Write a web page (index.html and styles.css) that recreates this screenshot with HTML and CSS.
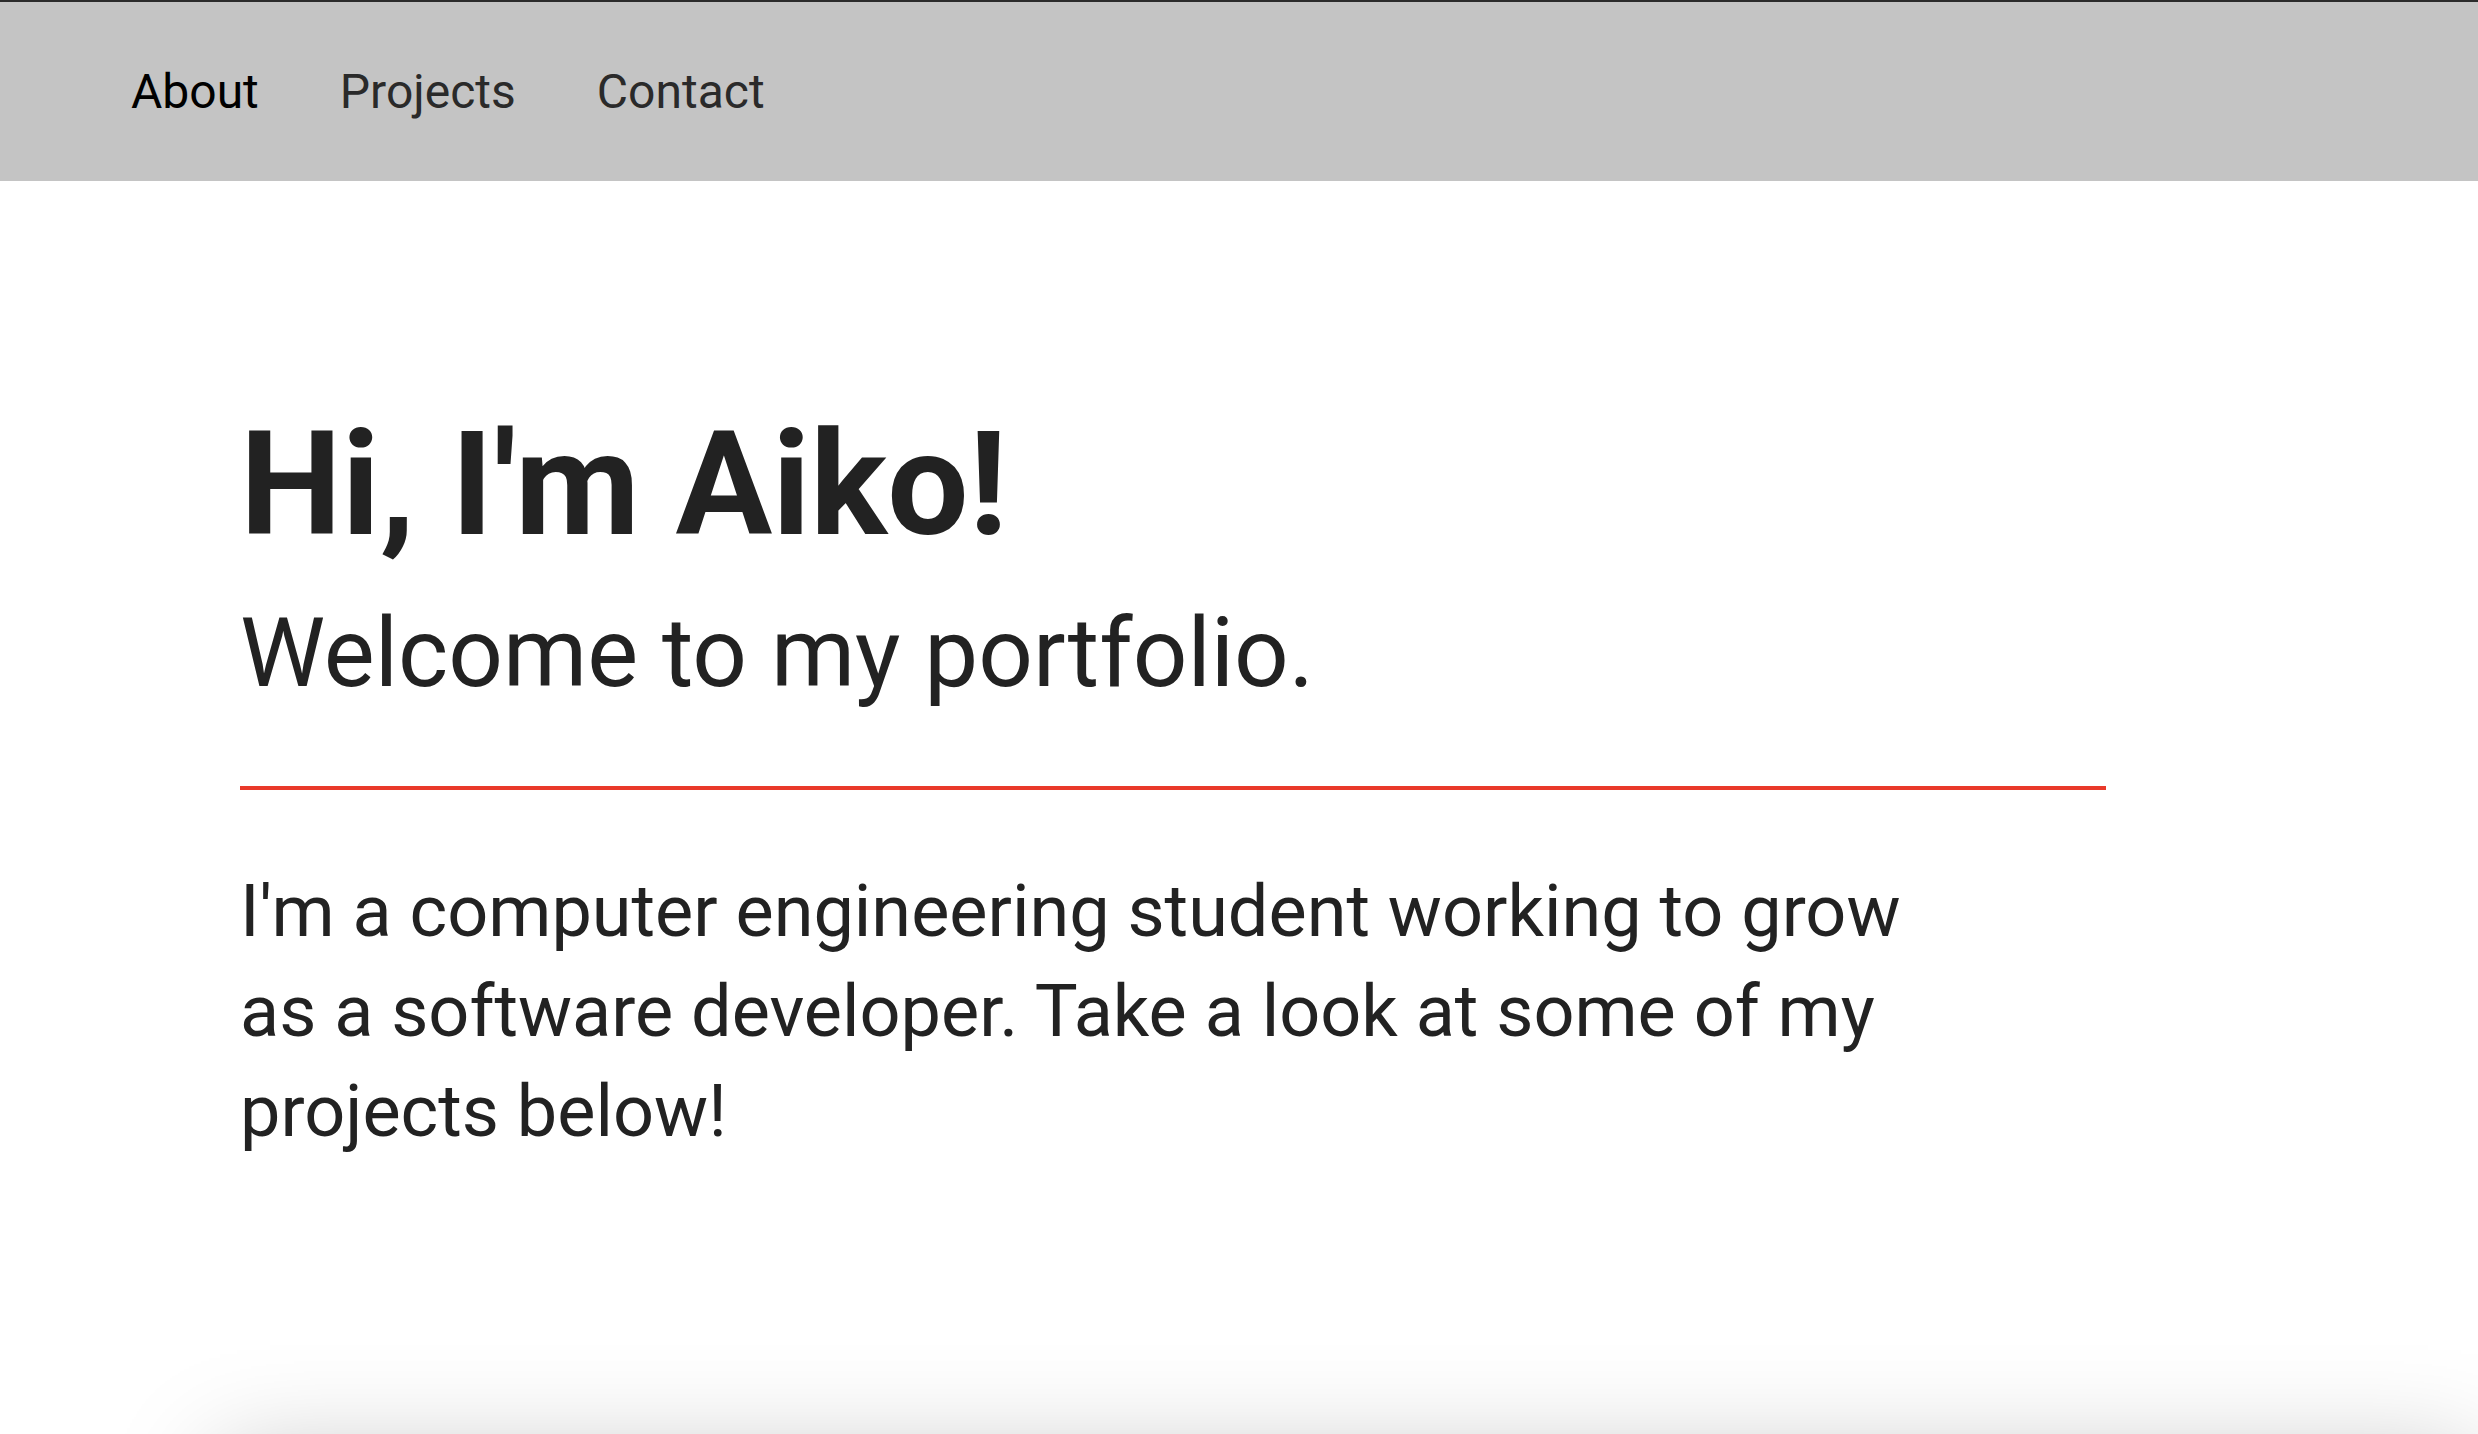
FILE: index.html
```html
<!DOCTYPE html>
<html lang="en">
<head>
<meta charset="utf-8">
<title>Aiko — Portfolio</title>
<link rel="stylesheet" href="styles.css">
</head>
<body>
<nav class="topnav">
  <a class="topnav-link is-active" href="#about">About</a>
  <a class="topnav-link" href="#projects">Projects</a>
  <a class="topnav-link" href="#contact">Contact</a>
</nav>
<main class="intro" id="about">
  <h1 class="intro-title">Hi, I'm Aiko!</h1>
  <h2 class="intro-subtitle">Welcome to my portfolio.</h2>
  <hr class="intro-divider">
  <p class="intro-text">I'm a computer engineering student working to grow as a software developer. Take a look at some of my projects below!</p>
</main>
<section class="projects" id="projects"></section>
</body>
</html>
```

FILE: styles.css
```css
html, body {
  margin: 0;
  padding: 0;
  background: #fff;
}
body {
  font-family: Roboto, "Liberation Sans", Arial, sans-serif;
  color: #222;
  overflow-x: hidden;
}
.topnav {
  display: flex;
  align-items: center;
  gap: 81px;
  height: 179px;
  padding-left: 131px;
  background: #c4c4c4;
  border-top: 2px solid #2b2b2b;
}
.topnav-link {
  font-size: 48px;
  color: #2a2a2a;
  text-decoration: none;
}
.topnav-link.is-active {
  color: #000;
}
.intro {
  padding: 231px 0 0 240px;
}
.intro-title {
  margin: 0;
  font-size: 144px;
  line-height: 146px;
  font-weight: 700;
  color: #222;
}
.intro-subtitle {
  margin: 46px 0 0;
  font-size: 96px;
  line-height: 98px;
  font-weight: 400;
  color: #222;
}
.intro-divider {
  width: 1866px;
  height: 4px;
  margin: 84px 0 0;
  border: 0;
  background: #e9392a;
}
.intro-text {
  max-width: 1700px;
  margin: 72px 0 0;
  font-size: 72px;
  line-height: 100px;
  color: #222;
}
.projects {
  margin: 297px 0 0 220px;
  height: 400px;
  background: #fff;
  box-shadow: 0 0 100px rgba(0, 0, 0, 0.25);
}
```
